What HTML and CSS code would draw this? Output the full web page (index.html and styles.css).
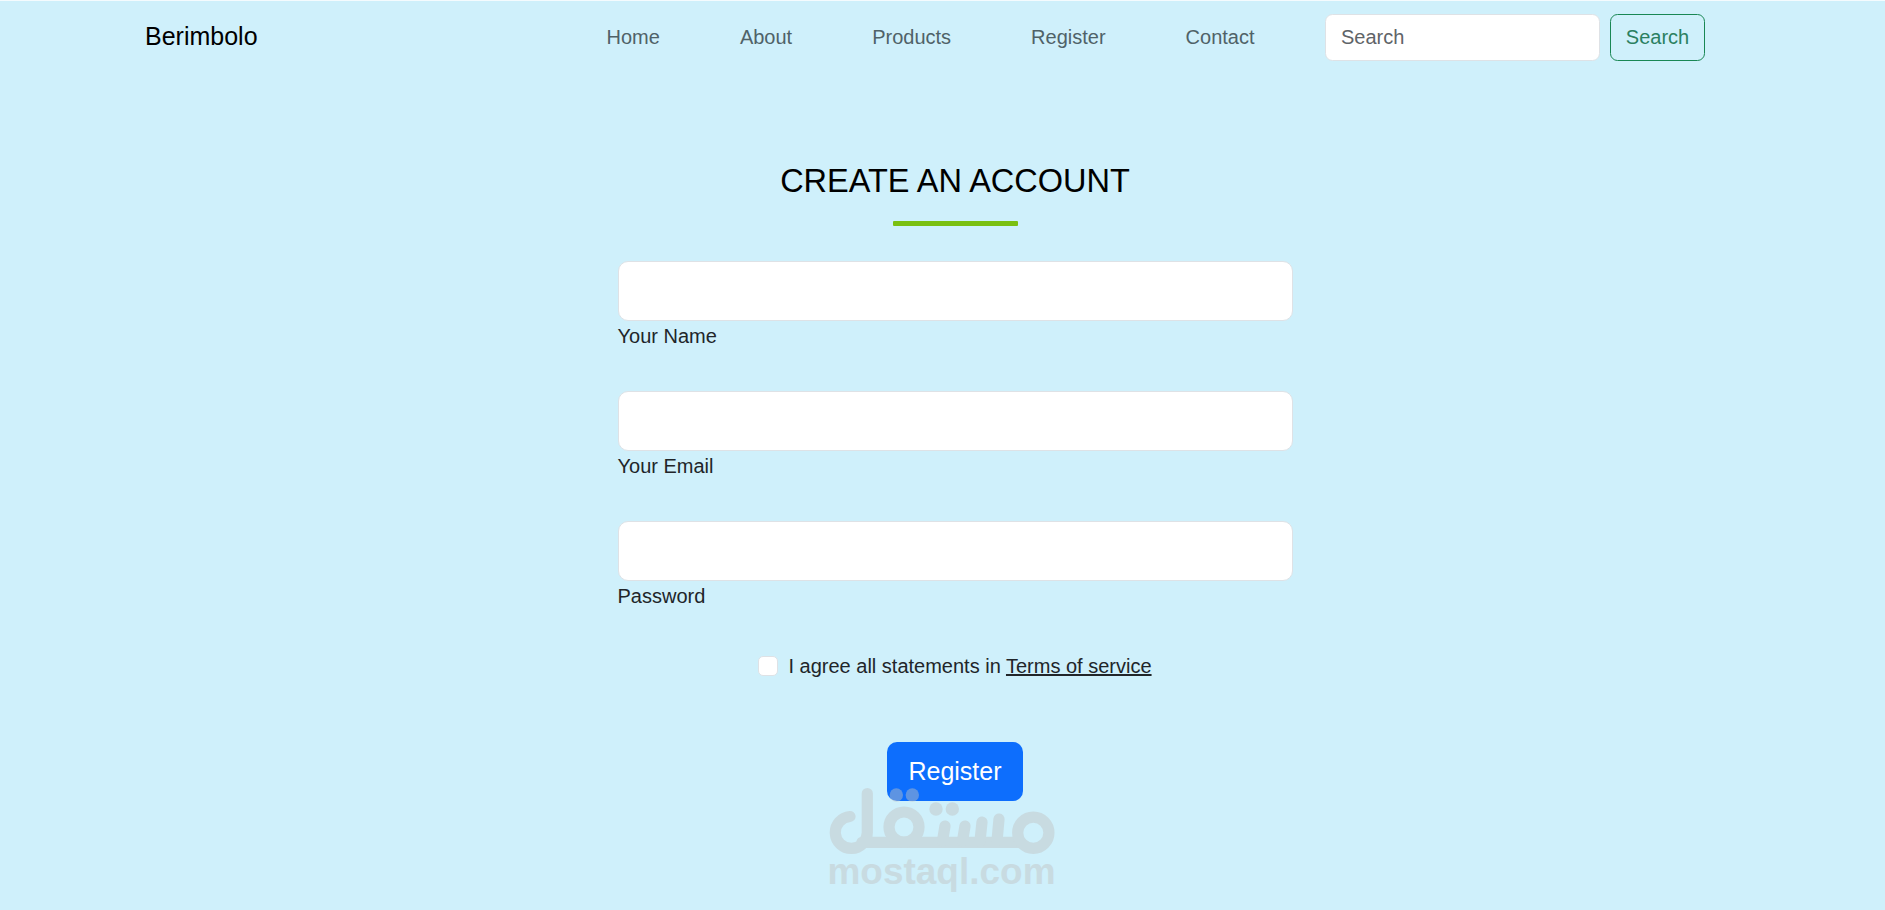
FILE: index.html
```
<!DOCTYPE html>
<html lang="en">

<head>
    <meta charset="UTF-8">
    <meta name="viewport" content="width=device-width, initial-scale=1.0">
    <title>Berimbolo</title>
    <link rel="stylesheet" href="styles.css">
</head>
<body>
    <nav class="navbar">
        <a class="brand" href="#">Berimbolo</a>
        <ul class="nav-links">
            <li><a href="#">Home</a></li>
            <li><a href="#">About</a></li>
            <li><a href="#">Products</a></li>
            <li><a href="#">Register</a></li>
            <li><a href="#">Contact</a></li>
        </ul>
        <form class="search">
            <input class="search-input" type="search" placeholder="Search">
            <button class="search-btn" type="button">Search</button>
        </form>
    </nav>

    <main class="register">
        <h2 class="title">CREATE AN ACCOUNT</h2>
        <div class="line"></div>
        <form class="register-form">
            <div class="field">
                <input type="text" id="name">
                <label for="name">Your Name</label>
            </div>
            <div class="field">
                <input type="email" id="email">
                <label for="email">Your Email</label>
            </div>
            <div class="field">
                <input type="password" id="password">
                <label for="password">Password</label>
            </div>
            <div class="agree">
                <input type="checkbox" id="agree">
                <label for="agree">I agree all statements in <a href="#">Terms of service</a></label>
            </div>
            <button class="register-btn" type="button">Register</button>
        </form>
    </main>

    <!-- watermark -->
    <svg class="watermark" width="260" height="120" viewBox="0 0 260 120">
        <g class="mark">
            <path d="M30 37.500A16 16 0 1 0 47.300 53.700V14.500M42 63.300H200" />
            <circle cx="84" cy="48" r="15" />
            <circle cx="213.300" cy="53.700" r="15.600" />
            <path d="M122.500 62L125 47M142.500 62L145 47M160 62L162 43M177 62L179 40" />
        </g>
        <g class="dots">
            <circle cx="76.300" cy="16" r="6.700" />
            <circle cx="92.300" cy="16" r="6.700" />
            <circle cx="116" cy="30" r="6.700" />
            <circle cx="132.300" cy="30" r="6.700" />
        </g>
        <text x="7.500" y="105" textLength="228" lengthAdjust="spacingAndGlyphs">mostaql.com</text>
    </svg>
</body>
</html>
```
FILE: styles.css
```
*{
    margin: 0;
    padding: 0;
    box-sizing: border-box;
}
body{
    min-height: 910px;
    position: relative;
    border-top: 1px solid #f4fbfe;
    background: #cff0fb;
    color: #212529;
    font-family: "Liberation Sans", Arial, sans-serif;
    font-size: 20px;
    line-height: 30px;
}
input, button{
    font: inherit;
}
a{
    color: inherit;
}
li{
    list-style: none;
}

.navbar{
    display: flex;
    align-items: center;
    height: 72px;
    padding: 0 180px 0 145px;
}
.brand{
    margin-right: auto;
    padding-bottom: 2px;
    color: #000;
    font-size: 25px;
    text-decoration: none;
}
.nav-links{
    display: flex;
    gap: 80px;
    margin-right: 70.5px;
    color: #4f6268;
}
.nav-links a{
    text-decoration: none;
}
.search{
    display: flex;
    gap: 10px;
}
.search-input{
    width: 275px;
    height: 47px;
    padding: 0 15px;
    border: 1px solid #dee2e6;
    border-radius: 7.5px;
    background: #fff;
}
.search-input::placeholder{
    color: #5f6468;
}
.search-btn{
    width: 95px;
    height: 47px;
    border: 1px solid #198754;
    border-radius: 7.5px;
    background: none;
    color: #2b8061;
}

.register{
    width: 675px;
    margin: 86px auto 0 617.5px;
}
.title{
    color: #000;
    font-size: 32.5px;
    font-weight: normal;
    line-height: 45px;
    text-align: center;
}
.line{
    width: 125px;
    height: 5px;
    margin: 17px auto 35px;
    border-radius: 1px;
    background: #7ac011;
}
.register-form{
    display: flex;
    flex-direction: column;
    align-items: center;
}
.field{
    width: 100%;
    height: 130px;
}
.field input{
    display: block;
    width: 100%;
    height: 60px;
    padding: 0 20px;
    border: 1px solid #dee2e6;
    border-radius: 10px;
    background: #fff;
}
.field label{
    display: block;
}
.agree{
    display: flex;
    align-items: center;
    gap: 10px;
}
.agree input{
    appearance: none;
    width: 20px;
    height: 20px;
    border: 1px solid #dee2e6;
    border-radius: 5px;
    background: #fff;
}
.register-btn{
    width: 136px;
    height: 59px;
    margin-top: 61px;
    padding-bottom: 2px;
    border: none;
    border-radius: 10px;
    background: #0d6efd;
    color: #fff;
    font-size: 25px;
}

.watermark{
    position: absolute;
    left: 820px;
    top: 778px;
    opacity: 0.45;
}
.mark{
    fill: none;
    stroke: #c1c2c2;
    stroke-width: 11.2;
    stroke-linecap: round;
}
.dots, .watermark text{
    fill: #c1c2c2;
}
.watermark text{
    font-size: 37px;
    font-weight: bold;
}
```
